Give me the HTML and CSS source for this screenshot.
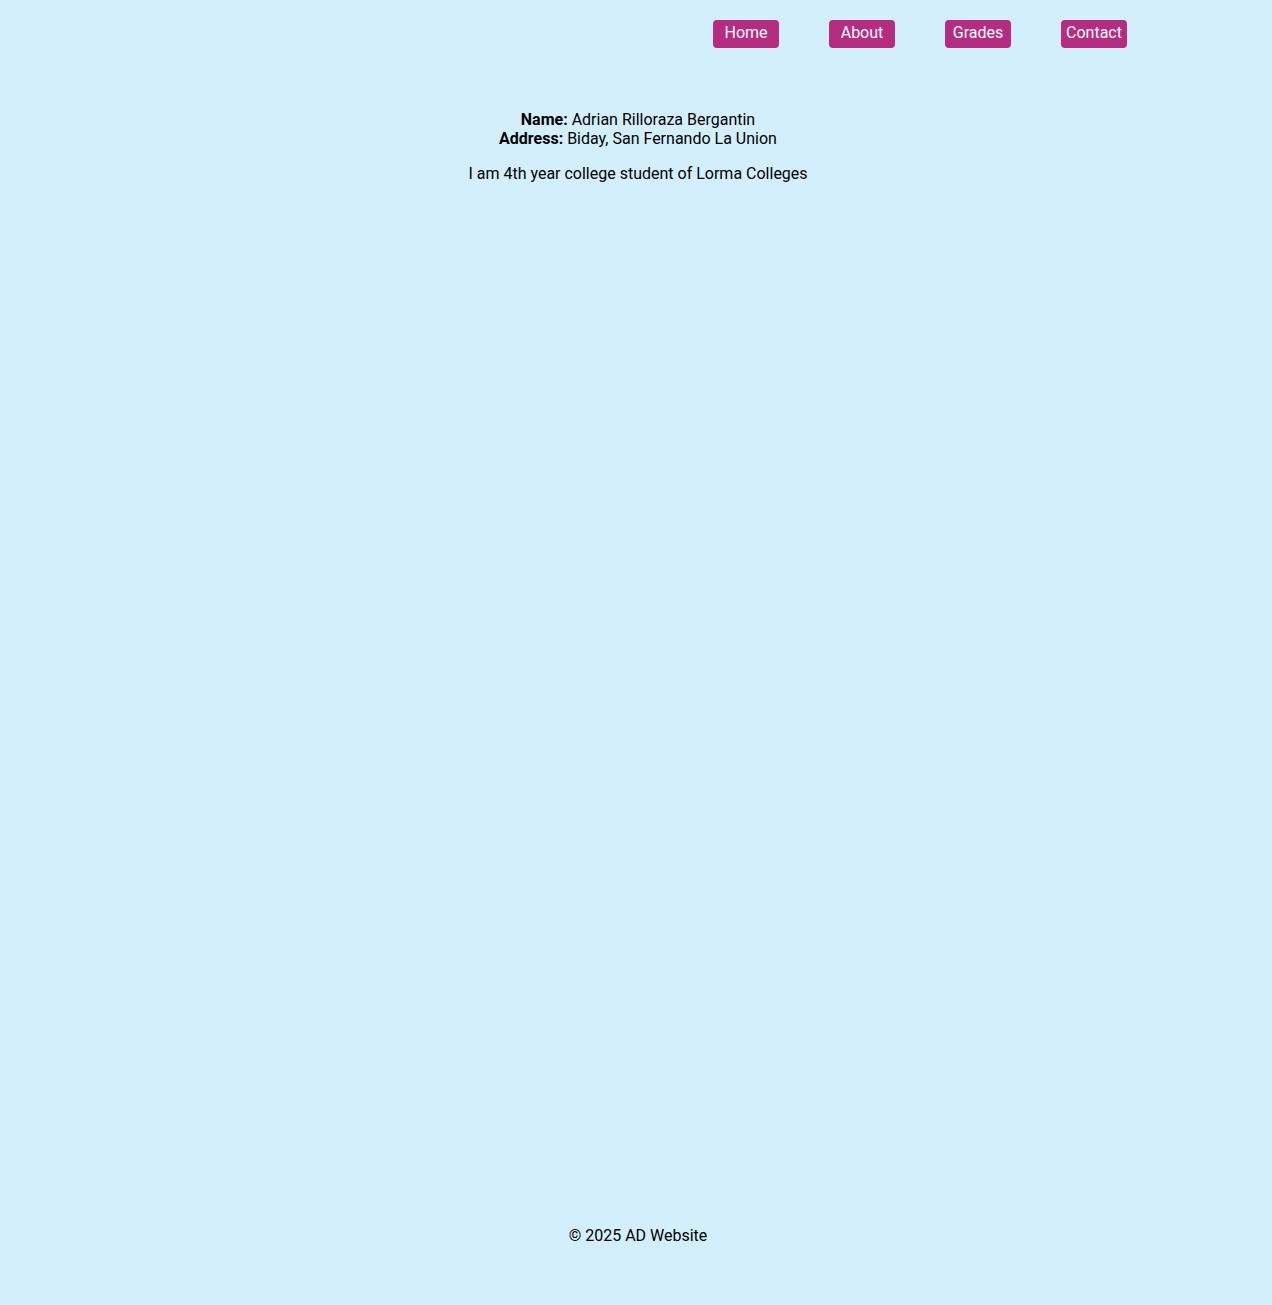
FILE: index.html
```html
<!DOCTYPE html>
<html lang="en">
<head>
<meta charset="utf-8">
<title>AD Website</title>
<link rel="stylesheet" href="styles.css">
</head>
<body>
<header class="site-header">
  <nav class="nav">
    <a class="nav-btn" href="#">Home</a>
    <a class="nav-btn" href="#">About</a>
    <a class="nav-btn" href="#">Grades</a>
    <a class="nav-btn" href="#">Contact</a>
  </nav>
</header>
<main class="content">
  <p class="info"><strong>Name:</strong> Adrian Rilloraza Bergantin<br><strong>Address:</strong> Biday, San Fernando La Union</p>
  <p class="bio">I am 4th year college student of Lorma Colleges</p>
</main>
<footer class="site-footer">
  <p>&copy; 2025 AD Website</p>
</footer>
</body>
</html>
```

FILE: styles.css
```css
html, body {
  margin: 0;
  padding: 0;
}
body {
  background: #d3effd;
  font-family: Roboto, "Liberation Sans", sans-serif;
  font-size: 16px;
  color: #000;
  min-height: 1305px;
  display: flex;
  flex-direction: column;
}
.site-header {
  padding: 20px 145px 0 0;
}
.nav {
  display: flex;
  justify-content: flex-end;
  gap: 50px;
}
.nav-btn {
  display: block;
  width: 66px;
  height: 28px;
  line-height: 25px;
  text-align: center;
  background: #b42d80;
  color: #fff;
  text-decoration: none;
  border-radius: 4px;
}
.content {
  flex: 1;
  text-align: center;
  padding: 62px 0 0 4px;
}
.content p {
  margin: 0 0 16px;
  line-height: 19px;
}
.site-footer {
  text-align: center;
  padding: 0 0 60px 4px;
}
.site-footer p {
  margin: 0;
  line-height: 19px;
}
```
